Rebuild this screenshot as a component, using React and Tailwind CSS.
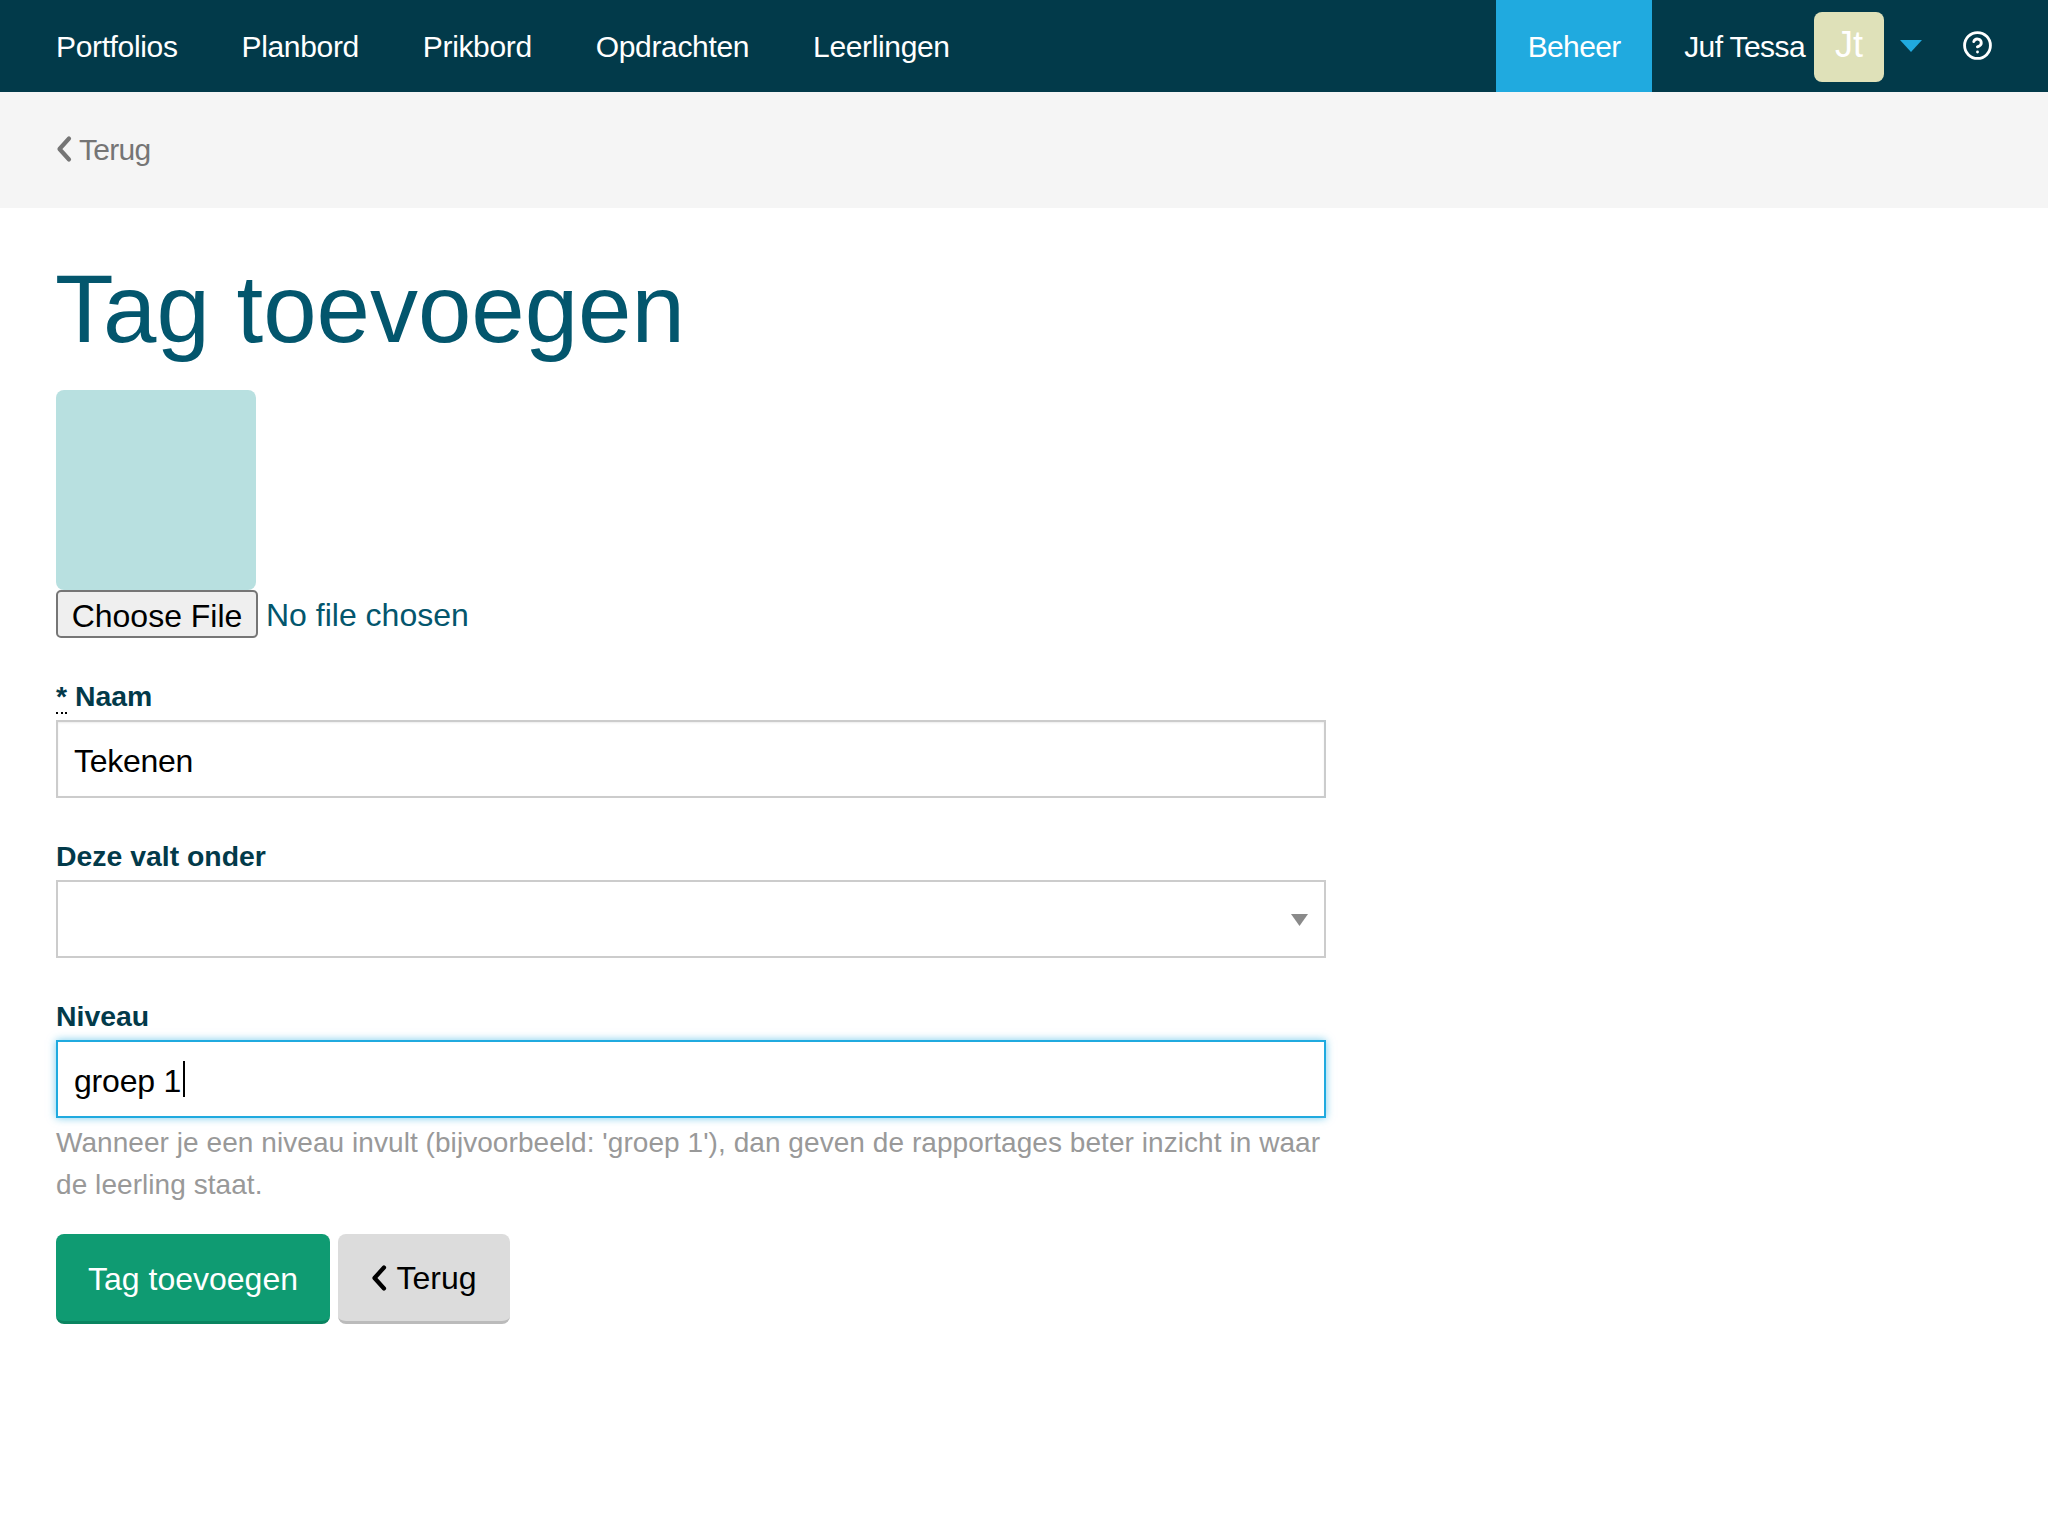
import React from "react";
import { CircleHelp } from "lucide-react";

const navItems = ["Portfolios", "Planbord", "Prikbord", "Opdrachten", "Leerlingen"];

const Chevron = ({ className }) => (
  <svg width="16" height="28" viewBox="0 0 16 28" fill="none" className={className}>
    <path d="M13 3.5 3.5 14 13 24.5" stroke="currentColor" strokeWidth="4.2" strokeLinecap="round" strokeLinejoin="round" />
  </svg>
);

const Label = ({ children }) => (
  <label className="block h-[42px] mb-[3px] text-[28.4px] leading-[42px] font-bold text-[#023a4a]">
    {children}
  </label>
);

const App = () => {
  return (
    <div className="min-h-screen bg-white font-['Liberation_Sans',Arial,sans-serif] text-[30px]">
      {/* Top nav */}
      <nav className="flex items-stretch justify-between h-[92px] bg-[#023a4a] text-white pl-6">
        <ul className="flex items-center">
          {navItems.map((item) => (
            <li key={item} className="px-8 tracking-[-0.35px]">
              {item}
            </li>
          ))}
        </ul>
        <div className="flex items-stretch">
          <div className="flex items-center justify-center w-[156px] bg-[#20aadf] tracking-[-0.6px]">
            Beheer
          </div>
          <div className="flex items-center pl-8 pr-[55px]">
            <span className="tracking-[-0.6px]">Juf Tessa</span>
            <div className="flex items-center justify-center w-[70px] h-[70px] ml-[9px] mt-[2px] pb-1 rounded-lg bg-[#dfe1b9] text-[36px]">
              Jt
            </div>
            <svg width="22" height="12" viewBox="0 0 22 12" className="ml-4 mr-[40px]">
              <path d="M0 0h22L11 12z" fill="#20aadf" />
            </svg>
            <CircleHelp size={31} strokeWidth={2.2} className="mb-[2px]" />
          </div>
        </div>
      </nav>

      {/* Back bar */}
      <div className="flex items-center h-[116px] pb-[2px] px-14 bg-[#f5f5f5] text-[#757575] tracking-[-0.7px]">
        <Chevron className="shrink-0 mr-[7px]" />
        Terug
      </div>

      <main className="px-14 pt-[38px]">
        <h1 className="-ml-[1px] text-[96px] leading-[126px] text-[#03566d] mb-[18px]">Tag toevoegen</h1>

        {/* Image + file picker */}
        <div className="w-[200px] h-[200px] rounded-lg bg-[#b8e0e0]" />
        <div className="flex items-center h-[48px] mb-[37px]">
          <button className="h-[48px] w-[202px] pb-[3px] rounded-[5px] border-2 border-[#767676] bg-[#efefef] text-[32px] text-black">
            Choose File
          </button>
          <span className="ml-[8px] pt-[2px] text-[32px] text-[#03566d]">No file chosen</span>
        </div>

        <div className="w-[1270px]">
          <Label>
            <span className="border-b-2 border-dotted border-black">*</span> Naam
          </Label>
          <input
            readOnly
            value="Tekenen"
            className="block w-full h-[78px] px-[16px] pt-[4px] mb-[37px] border-2 border-[#ccc] shadow-[inset_0_1px_2px_rgba(0,0,0,0.08)] text-[32px] tracking-[-0.3px] text-black outline-none"
          />

          <Label>Deze valt onder</Label>
          <div className="relative h-[78px] mb-[37px]">
            <select className="block w-full h-full px-[16px] border-2 border-[#ccc] bg-white appearance-none outline-none" />
            <svg width="17" height="12" viewBox="0 0 17 12" className="absolute right-[18px] top-[34px]">
              <path d="M0 0h17L8.5 12z" fill="#8a8a8a" />
            </svg>
          </div>

          <Label>Niveau</Label>
          <div className="flex items-center h-[78px] px-[16px] border-2 border-[#20aadf] shadow-[0_0_8px_rgba(32,170,223,0.6)] text-[32px] tracking-[-0.2px] text-black">
            <span className="pt-[3px]">groep 1</span>
            <span className="w-[2px] h-[36px] ml-[2px] bg-black" />
          </div>
          <p className="mt-[4px] text-[28px] tracking-[0.06px] leading-[42px] text-[#999]">
            Wanneer je een niveau invult (bijvoorbeeld: 'groep 1'), dan geven de rapportages beter inzicht in waar de leerling staat.
          </p>

          <div className="flex gap-2 mt-[28px]">
            <button className="h-[90px] w-[274px] pt-[2px] rounded-lg bg-[#0f9b72] border-b-[3px] border-[#0a8460] text-white text-[32px]">
              Tag toevoegen
            </button>
            <button className="flex items-center justify-center h-[90px] w-[172px] pt-[1px] rounded-lg bg-[#dcdcdc] border-b-[3px] border-[#bbb] text-black text-[32px]">
              <Chevron className="shrink-0 mr-[9px]" />
              Terug
            </button>
          </div>
        </div>
      </main>
    </div>
  );
};

export default App;
